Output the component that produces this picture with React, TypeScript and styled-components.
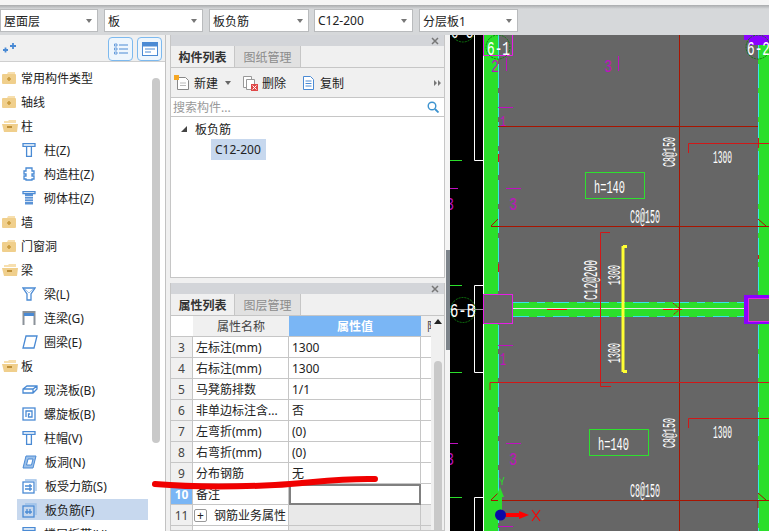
import React from "react";
import styled, { createGlobalStyle } from "styled-components";

const GlobalStyle = createGlobalStyle`
  html, body {
    margin: 0;
    padding: 0;
    width: 769px;
    height: 531px;
    overflow: hidden;
    background: #f0f0f0;
    font-family: "Noto Sans", "Noto Sans CJK SC", sans-serif;
    font-size: 12px;
    color: #222;
  }
  * { box-sizing: border-box; }
`;

const Page = styled.div`
  position: relative;
  width: 769px;
  height: 531px;
  overflow: hidden;
  display: flex;
  flex-direction: column;
`;

const TopStrip = styled.div`
  height: 5px;
  background: #f5f5f5;
`;

const FilterBar = styled.div`
  height: 30px;
  padding-top: 4px;
  display: flex;
  background: linear-gradient(#a9abad 0, #d6d8da 4px);
`;

const Filter = styled.div<{ $w: number; $gap: number }>`
  width: ${(p) => p.$w}px;
  margin-right: ${(p) => p.$gap}px;
  height: 23px;
  padding: 0 3px;
  display: flex;
  align-items: center;
  justify-content: space-between;
  background: #fff;
  border: 1px solid #b9bbbd;
  font-size: 12px;
  &::after {
    content: "";
    margin-right: 2px;
    border-top: 4px solid #777;
    border-left: 3px solid transparent;
    border-right: 3px solid transparent;
  }
`;

const Body = styled.div`
  flex: 1;
  min-height: 0;
  display: flex;
`;

const LeftPanel = styled.div`
  width: 166px;
  height: 496px;
  background: #fff;
  border-right: 1px solid #c2c2c2;
  overflow: hidden;
`;

const LeftTools = styled.div`
  height: 27px;
  padding: 1px 3px 0 3px;
  display: flex;
  align-items: center;
  gap: 4px;
  background: #f0f0f0;
  border-bottom: 1px solid #cfcfcf;
  > svg:first-child { margin-right: 88px; }
`;

const ModeButton = styled.div`
  width: 25px;
  height: 24px;
  display: flex;
  align-items: center;
  justify-content: center;
  border: 1px solid #7db9ee;
  border-radius: 4px;
  background: #eef6fd;
`;

const TreeWrap = styled.div`
  position: relative;
  padding-top: 4px;
`;

const TreeScroll = styled.div`
  position: absolute;
  left: 152px;
  top: 16px;
  width: 8px;
  height: 365px;
  border-radius: 4px;
  background: #c9c9c9;
`;

const TreeRow = styled.div<{ $child: boolean; $selected?: boolean }>`
  height: 24px;
  display: flex;
  align-items: center;
  margin-left: ${(p) => (p.$child ? 17 : 2)}px;
  width: ${(p) => (p.$child ? 131 : 146)}px;
  padding-left: ${(p) => (p.$child ? 5 : 0)}px;
  gap: ${(p) => (p.$child ? 8 : 5)}px;
  white-space: nowrap;
  background: ${(p) => (p.$selected ? "linear-gradient(transparent 1px, #c7d8ee 1px, #c7d8ee 22px, transparent 22px)" : "transparent")};
`;

const Gutter = styled.div`
  width: 4px;
`;

const MidColumn = styled.div`
  width: 275px;
  display: flex;
  flex-direction: column;
  gap: 5px;
`;

const Panel = styled.div<{ $h: number }>`
  height: ${(p) => p.$h}px;
  flex: none;
  display: flex;
  flex-direction: column;
  border-left: 1px solid #c6c6c6;
  border-right: 1px solid #c6c6c6;
  border-bottom: 1px solid #c6c6c6;
  overflow: hidden;
  background: #f0f0f0;
`;

const PanelHead = styled.div`
  height: 11px;
  flex: none;
  padding-right: 5px;
  display: flex;
  align-items: center;
  justify-content: flex-end;
  background: #d3d5d9;
`;

const Tabs = styled.div`
  height: 22px;
  flex: none;
  display: flex;
  background: #f0f0f0;
  border-bottom: 1px solid #c6c6c6;
`;

const Tab = styled.div<{ $active?: boolean }>`
  width: ${(p) => (p.$active ? 64 : 66)}px;
  display: flex;
  align-items: center;
  justify-content: center;
  font-weight: ${(p) => (p.$active ? 700 : 400)};
  color: ${(p) => (p.$active ? "#333" : "#8c8c8c")};
  background: ${(p) => (p.$active ? "#f0f0f0" : "#e1e1e1")};
  border-right: 1px solid #c6c6c6;
`;

const ListTools = styled.div`
  height: 30px;
  flex: none;
  padding: 0 3px;
  display: flex;
  align-items: center;
  background: #f0f0f0;
  border-bottom: 1px solid #c6c6c6;
  > svg:last-child { margin-left: auto; }
`;

const ToolItem = styled.div<{ $w: number }>`
  width: ${(p) => p.$w}px;
  display: flex;
  align-items: center;
  gap: 4px;
`;

const Caret = styled.span`
  margin-left: 3px;
  border-top: 4px solid #666;
  border-left: 3px solid transparent;
  border-right: 3px solid transparent;
`;

const Search = styled.div`
  height: 19px;
  flex: none;
  padding: 0 5px 0 2px;
  display: flex;
  align-items: center;
  justify-content: space-between;
  background: #fff;
  border-bottom: 1px solid #c6c6c6;
  color: #999;
`;

const ListBody = styled.div`
  flex: 1;
  background: #fff;
  padding-top: 1px;
`;

const ListRoot = styled.div`
  height: 21px;
  padding-left: 10px;
  display: flex;
  align-items: center;
  gap: 8px;
`;

const ListRootArrow = styled.span`
  border-bottom: 6px solid #444;
  border-left: 6px solid transparent;
`;

const ListItem = styled.div`
  margin-left: 40px;
  width: 55px;
  height: 21px;
  padding-left: 4px;
  display: flex;
  align-items: center;
  background: #c7d8ee;
`;

const TableWrap = styled.div`
  position: relative;
  flex: 1;
  display: flex;
  background: #f0f0f0;
`;

const PropGrid = styled.div`
  width: 260px;
  display: grid;
  grid-template-columns: 22px 96px 132px 10px;
  grid-auto-rows: 21px;
  overflow: hidden;
  background: #fff;
`;

const HeadCell = styled.div<{ $accent?: boolean; $blank?: boolean; $clipped?: boolean }>`
  display: flex;
  align-items: center;
  justify-content: ${(p) => (p.$clipped ? "flex-start" : "center")};
  padding-left: ${(p) => (p.$clipped ? 6 : 0)}px;
  overflow: hidden;
  white-space: nowrap;
  background: ${(p) => (p.$blank ? "#fff" : p.$accent ? "#7ab6f5" : "#f0f0f0")};
  color: ${(p) => (p.$accent ? "#fff" : "#444")};
  font-weight: ${(p) => (p.$accent ? 700 : 400)};
  border-bottom: 1px solid #c6c6c6;
`;

const NumCell = styled.div<{ $active?: boolean }>`
  display: flex;
  align-items: center;
  justify-content: center;
  color: ${(p) => (p.$active ? "#fff" : "#444")};
  font-weight: ${(p) => (p.$active ? 700 : 400)};
  background: ${(p) => (p.$active ? "#7ab6f5" : "#f0f0f0")};
  border-bottom: 1px solid #c6c6c6;
  border-right: 1px solid #c6c6c6;
`;

const NameCell = styled.div`
  display: flex;
  align-items: center;
  gap: 5px;
  padding-left: 3px;
  white-space: nowrap;
  overflow: hidden;
  background: #fff;
  border-bottom: 1px solid #c6c6c6;
  border-right: 1px solid #c6c6c6;
`;

const ValueCell = styled.div<{ $editing?: boolean; $group?: boolean }>`
  display: flex;
  align-items: center;
  padding-left: 3px;
  background: ${(p) => (p.$group ? "#e9e9e9" : "#fff")};
  border: ${(p) => (p.$editing ? "2px solid #808080" : "0 solid #c6c6c6")};
  border-bottom-width: ${(p) => (p.$editing ? 2 : 1)}px;
  border-right-width: ${(p) => (p.$editing ? 2 : 1)}px;
`;

const ExtraCell = styled.div<{ $group?: boolean }>`
  background: ${(p) => (p.$group ? "#e9e9e9" : "#fff")};
  border-bottom: 1px solid #c6c6c6;
`;

const PlusBox = styled.span`
  width: 13px;
  height: 13px;
  margin: 0 2px 0 -2px;
  flex: none;
  display: flex;
  align-items: center;
  justify-content: center;
  border: 1px solid #999;
  border-radius: 2px;
  font-size: 12px;
  line-height: 11px;
`;

const PropScroll = styled.div`
  flex: 1;
  position: relative;
  background: #f0f0f0;
  &::before {
    content: "";
    position: absolute;
    left: 3px;
    top: 3px;
    border-bottom: 5px solid #222;
    border-left: 4px solid transparent;
    border-right: 4px solid transparent;
  }
  &::after {
    content: "";
    position: absolute;
    left: 3px;
    top: 45px;
    width: 8px;
    height: 190px;
    border-radius: 4px;
    background: #c9c9c9;
  }
`;

const Splitter = styled.div`
  width: 5px;
  background: #f4f4f4;
  padding-top: 215px;
`;

const SplitterHandle = styled.div`
  width: 4px;
  height: 100px;
  background: #7d848b;
  margin-left: 1px;
`;

const Cad = styled.svg`
  display: block;
  flex: none;
  text {
    font-family: "Liberation Mono", monospace;
  }
`;

const MarkerOverlay = styled.svg`
  position: absolute;
  left: 0;
  top: 0;
  pointer-events: none;
`;

const BLUE = "#4a8ad4";

const CloseIcon: React.FC = () => (
  <svg width="8" height="8" viewBox="0 0 8 8">
    <path d="M1 1l6 6M7 1L1 7" stroke="#777" strokeWidth="1.500" />
  </svg>
);

const TreeIcon: React.FC<{ kind: string }> = ({ kind }) => {
  const s = { fill: "none", stroke: BLUE, strokeWidth: 1.3 };
  switch (kind) {
    case "closed":
      return (
        <svg width="14" height="14" viewBox="0 0 14 14">
          <path d="M0 3h5l1-2h7v2H0z" fill="#f7dfae" />
          <rect x="0" y="3" width="14" height="10" rx="1" fill="#f0cf8c" />
          <path d="M5 8h4M7 6v4" stroke="#c99a3c" strokeWidth="1.6" />
        </svg>
      );
    case "open":
      return (
        <svg width="16" height="14" viewBox="0 0 16 14" style={{ marginRight: -2 }}>
          <path d="M2 2h4l1-1h7v3H2z" fill="#f7dfae" />
          <path d="M0 5h16l-1 8H2z" fill="#f0cf8c" />
          <path d="M5 8h5" stroke="#b9892f" strokeWidth="1.8" />
        </svg>
      );
    case "column":
      return (
        <svg width="14" height="14" viewBox="0 0 14 14">
          <path d="M1 .7h12v2.6H1zM4.6 3.3h4.8v10H4.6z" {...s} />
        </svg>
      );
    case "struct":
      return (
        <svg width="14" height="14" viewBox="0 0 14 14">
          <path d="M4 1h6v3h2v3h-2v2h2v3h-2v1H4v-1H2V9h2V7H2V4h2z" {...s} />
        </svg>
      );
    case "brick":
      return (
        <svg width="14" height="14" viewBox="0 0 14 14">
          <path d="M1 .7h12v2H1z" {...s} />
          <rect x="3" y="3" width="8" height="10.5" fill="#5b93d6" />
          <path d="M3 5.5h8M3 8h8M3 10.5h8" stroke="#cfe0f4" strokeWidth="1" />
        </svg>
      );
    case "beam":
      return (
        <svg width="14" height="14" viewBox="0 0 14 14">
          <path d="M1 1h12L9 7v6H5V7z" {...s} />
          <path d="M3 2l4 4 4-4" fill="none" stroke="#a9c7ea" />
        </svg>
      );
    case "link":
      return (
        <svg width="14" height="16" viewBox="0 0 14 16">
          <path d="M1.5 15V2h11v13" fill="none" stroke="#8b9299" strokeWidth="2" />
          <rect x="2" y="3" width="10" height="3" fill="#4a8ad4" />
        </svg>
      );
    case "ring":
      return (
        <svg width="16" height="14" viewBox="0 0 16 14" style={{ marginRight: -2 }}>
          <path d="M4 1h11l-3 12H1z" {...s} />
        </svg>
      );
    case "slab":
      return (
        <svg width="16" height="12" viewBox="0 0 16 12" style={{ marginRight: -2 }}>
          <path d="M1 5l4-3h10v3l-4 4H1zM1 5h10l4-3M11 5v4" {...s} />
        </svg>
      );
    case "spiral":
      return (
        <svg width="14" height="14" viewBox="0 0 14 14">
          <rect x="1" y="1" width="12" height="12" {...s} />
          <path d="M4 10V4h6v6H6.500V7h1.500" {...s} />
        </svg>
      );
    case "hole":
      return (
        <svg width="15" height="14" viewBox="0 0 15 14">
          <path d="M4 1h10l-3 12H1z" fill="#9cc0e9" stroke={BLUE} />
          <path d="M6 4h5l-1.500 6h-5z" fill="#fff" stroke={BLUE} />
        </svg>
      );
    default:
      return (
        <svg width="15" height="15" viewBox="0 0 15 15">
          <path d="M3 1h11v11" {...s} stroke="#9cc0e9" />
          <rect x="1" y="3" width="11" height="11" {...s} />
          <path d={kind === "neg" ? "M3 9h7M5 6v5M8 6v5" : "M3 7h7M3 10h7M8 5v7"} {...s} />
        </svg>
      );
  }
};

const treeRows = [
  { label: "常用构件类型", icon: "closed" },
  { label: "轴线", icon: "closed" },
  { label: "柱", icon: "open" },
  { label: "柱(Z)", icon: "column", child: true },
  { label: "构造柱(Z)", icon: "struct", child: true },
  { label: "砌体柱(Z)", icon: "brick", child: true },
  { label: "墙", icon: "closed" },
  { label: "门窗洞", icon: "closed" },
  { label: "梁", icon: "open" },
  { label: "梁(L)", icon: "beam", child: true },
  { label: "连梁(G)", icon: "link", child: true },
  { label: "圈梁(E)", icon: "ring", child: true },
  { label: "板", icon: "open" },
  { label: "现浇板(B)", icon: "slab", child: true },
  { label: "螺旋板(B)", icon: "spiral", child: true },
  { label: "柱帽(V)", icon: "column", child: true },
  { label: "板洞(N)", icon: "hole", child: true },
  { label: "板受力筋(S)", icon: "pos", child: true },
  { label: "板负筋(F)", icon: "neg", child: true, selected: true },
  { label: "楼层板带(H)", icon: "column", child: true },
];

const propRows = [
  { n: 3, name: "左标注(mm)", value: "1300" },
  { n: 4, name: "右标注(mm)", value: "1300" },
  { n: 5, name: "马凳筋排数", value: "1/1" },
  { n: 6, name: "非单边标注含...", value: "否" },
  { n: 7, name: "左弯折(mm)", value: "(0)" },
  { n: 8, name: "右弯折(mm)", value: "(0)" },
  { n: 9, name: "分布钢筋", value: "无" },
  { n: 10, name: "备注", value: "", editing: true },
  { n: 11, name: "钢筋业务属性", value: "", group: true },
  { n: 12, name: "显示样式", value: "", group: true },
];

const filters = [
  { label: "屋面层", w: 98, gap: 6 },
  { label: "板", w: 99, gap: 6 },
  { label: "板负筋", w: 100, gap: 5 },
  { label: "C12-200", w: 99, gap: 6 },
  { label: "分层板1", w: 99, gap: 0 },
];

const CadLabel: React.FC<{ x: number; y: number; w: number; h?: number; rot?: boolean; fill?: string; children: string }> = ({
  x,
  y,
  w,
  h = 19,
  rot,
  fill = "#fff",
  children,
}) => (
  <text
    x={0}
    y={0}
    fontSize={h}
    fill={fill}
    textLength={w}
    lengthAdjust="spacingAndGlyphs"
    transform={`translate(${x} ${y})${rot ? " rotate(-90)" : ""}`}
  >
    {children}
  </text>
);

// canvas coordinates: svg origin is at page (450, 35)
const CadDrawing: React.FC = () => {
  const ox = 450;
  const oy = 35;
  return (
    <Cad width="319" height="496" viewBox={`${ox} ${oy} 319 496`}>
      <rect x={450} y={35} width={319} height={496} fill="#000" />
      <rect x={484} y={35} width={14} height={496} fill="#2bdf2b" />
      <rect x={498} y={35} width={260} height={496} fill="#666" />
      <rect x={758} y={35} width={11} height={496} fill="#2bdf2b" />
      <path d="M483.500 35V531" stroke="#fff" />
      <path d="M474.500 35V160.500H483M474.500 285.500H483M474.500 285.500V372.500H483M474.500 531V497.500H483" fill="none" stroke="#fff" />
      <path d="M450 160.500h12M450 285.500h12M450 372.500h12M450 497.500h12" stroke="#2bdf2b" />
      <path d="M498.500 35V531M758.500 35V531" stroke="#35e6e6" strokeDasharray="24 5" />

      {/* beam band */}
      <rect x={513} y={302} width={233} height={15} fill="#2bdf2b" />
      <path d="M513 302.500H745M513 316.500H745" stroke="#35e6e6" strokeDasharray="16 8 8 8" />
      <path d="M450 309.500H483" stroke="#9a9a9a" />
      <path d="M513 308.500H748" stroke="#e8e8e8" />
      <path d="M547 309.500h10M557 309.500h10M663 309.500h10M674 309.500h8" stroke="#f00" />
      <path d="M673 303l7 6-7 6" fill="none" stroke="#c00" strokeDasharray="2 1" />

      {/* columns */}
      <rect x={483.500} y={294.500} width={29} height={29} fill="#666" stroke="#e61ee6" strokeWidth="1" />
      <rect x={744} y={295} width={25} height={29} fill="#8a00ff" />
      <rect x={748.500} y={298.500} width={22} height={23} fill="#666" stroke="#e61ee6" />
      <path d="M744 35h25v10h-20v-5h-5z" fill="#8a00ff" />
      <path d="M483.500 35v20.500h29V35" fill="none" stroke="#e61ee6" />

      {/* rebar lines */}
      <g fill="none" stroke="#a81400">
        <path d="M498 126.500H758" />
        <path d="M679.500 35V531" />
        <path d="M491 226.500H769M491 226l7-7M766 226l-8-7" />
        <path d="M491 500.500H769M491 500l7-7M766 500l-8-7M758 500v8" />
      </g>
      <g fill="none" stroke="#d01818">
        <path d="M490 390V382.500H769" />
        <path d="M610 232.500H600.500V386.500H611" />
        <path d="M688.500 153V143.500H769" />
        <path d="M688.500 428V418.500H769" />
        <path d="M498.500 154v8M498.500 264v8M758.500 138v10M758.500 255v4" />
      </g>
      <path d="M623 246V372" stroke="#ffff33" strokeWidth="3" />
      <path d="M623 246.500h4M623 371.500h4" stroke="#ffff33" strokeWidth="3" />

      {/* magenta marks */}
      <g fill="none" stroke="#c010c0">
        <path d="M506.500 58v13M618.500 56v15M498 107.500h15M506 188.500h15M450 188.500h8M498 345.500h15M506 443.500h15M450 443.500h8M498 526.500h15" />
      </g>
      <CadLabel x={491} y={72} w={8} h={18} fill="#c010c0">2</CadLabel>
      <CadLabel x={604} y={72} w={8} h={18} fill="#c010c0">3</CadLabel>
      <CadLabel x={500} y={126} w={6} h={15} fill="#c010c0">1</CadLabel>
      <CadLabel x={509} y={210} w={8} h={19} fill="#c010c0">3</CadLabel>
      <CadLabel x={446} y={210} w={8} h={19} fill="#c010c0">3</CadLabel>
      <CadLabel x={500} y={365} w={6} h={19} fill="#c010c0">1</CadLabel>
      <CadLabel x={509} y={465} w={8} h={19} fill="#c010c0">3</CadLabel>
      <CadLabel x={446} y={465} w={8} h={19} fill="#c010c0">3</CadLabel>

      {/* axis bubbles */}
      <g fill="none" stroke="#0f7a0f" strokeDasharray="2 1">
        <circle cx={463} cy={310} r={12.500} />
        <circle cx={498} cy={47} r={12} />
        <circle cx={758} cy={47} r={12} />
        <circle cx={463} cy={30} r={12} />
      </g>
      <CadLabel x={450} y={317} w={25} h={21}>6-B</CadLabel>
      <CadLabel x={487} y={55} w={23} h={21}>6-1</CadLabel>
      <CadLabel x={747} y={55} w={23} h={21}>6-2</CadLabel>
      <CadLabel x={451} y={38} w={22} h={19}>6-C</CadLabel>

      {/* slab height boxes */}
      <rect x={585.500} y={172.500} width={59} height={26} fill="none" stroke="#2ee02e" />
      <rect x={589.500} y={429.500} width={59} height={26} fill="none" stroke="#2ee02e" />
      <CadLabel x={594} y={193} w={31}>h=140</CadLabel>
      <CadLabel x={598} y={450} w={31}>h=140</CadLabel>

      {/* dimensions */}
      <CadLabel x={675} y={167} w={30} h={18} rot>C8@150</CadLabel>
      <CadLabel x={675} y={448} w={30} h={18} rot>C8@150</CadLabel>
      <CadLabel x={630} y={223} w={30} h={20}>C8@150</CadLabel>
      <CadLabel x={630} y={497} w={30} h={20}>C8@150</CadLabel>
      <CadLabel x={713} y={163} w={19} h={19}>1300</CadLabel>
      <CadLabel x={713} y={438} w={19} h={19}>1300</CadLabel>
      <CadLabel x={597} y={300} w={40} h={20} rot>C12@200</CadLabel>
      <CadLabel x={620} y={285} w={20} h={19} rot>1300</CadLabel>
      <CadLabel x={620} y={363} w={20} h={19} rot>1300</CadLabel>

      {/* origin */}
      <path d="M500 515V496" stroke="#2bdf2b" strokeWidth="4" />
      <path d="M496 497l4-10 4 10z" fill="#2bdf2b" />
      <path d="M500 515H520" stroke="#f00" strokeWidth="4" />
      <path d="M519 511l10 4-10 4z" fill="#f00" />
      <circle cx={500.500} cy={515} r={5.500} fill="#0a0aa8" />
      <path d="M532 510l8 11M540 510l-8 11" stroke="#f00" strokeWidth="1.200" fill="none" />
      <path d="M499 478l3 4 2-5M502 482v3" stroke="#2bdf2b" fill="none" />
    </Cad>
  );
};

const App: React.FC = () => (
  <>
    <GlobalStyle />
    <Page>
      <TopStrip />
      <FilterBar>
        {filters.map((f) => (
          <Filter key={f.label} $w={f.w} $gap={f.gap}>
            {f.label}
          </Filter>
        ))}
      </FilterBar>
      <Body>
        <LeftPanel>
          <LeftTools>
            <svg width="13" height="11" viewBox="0 0 13 11">
              <path d="M0 7h5M2.500 4.500v5" stroke={BLUE} strokeWidth="1.800" />
              <path d="M7 3h6M10 0v6" stroke={BLUE} strokeWidth="1.800" />
            </svg>
            <ModeButton>
              <svg width="14" height="14" viewBox="0 0 14 14">
                <path d="M.5 2h2.500v2H.5zM.5 6h2.500v2H.5zM.5 10h2.500v2H.5z" fill="none" stroke={BLUE} strokeWidth=".8" />
                <path d="M5 3h9M5 7h9M5 11h9" stroke={BLUE} />
              </svg>
            </ModeButton>
            <ModeButton>
              <svg width="16" height="14" viewBox="0 0 16 14">
                <rect x=".5" y=".5" width="15" height="13" fill="#fff" stroke={BLUE} />
                <rect x="1" y="1" width="14" height="3.500" fill={BLUE} />
                <path d="M3 7h10M3 10h6" stroke={BLUE} />
              </svg>
            </ModeButton>
          </LeftTools>
          <TreeWrap>
            <TreeScroll />
            {treeRows.map((r) => (
              <TreeRow key={r.label} $child={!!r.child} $selected={r.selected}>
                <TreeIcon kind={r.icon} />
                {r.label}
              </TreeRow>
            ))}
          </TreeWrap>
        </LeftPanel>
        <Gutter />
        <MidColumn>
          <Panel $h={243}>
            <PanelHead>
              <CloseIcon />
            </PanelHead>
            <Tabs>
              <Tab $active>构件列表</Tab>
              <Tab>图纸管理</Tab>
            </Tabs>
            <ListTools>
              <ToolItem $w={69}>
                <svg width="16" height="16" viewBox="0 0 16 16">
                  <path d="M3.500 2.500h8l3 3v9h-11z" fill="#fff" stroke="#888" />
                  <path d="M6 8h6M6 10.500h6" stroke="#bbb" />
                  <rect x="0" y="0" width="5" height="5" fill="#f5a623" />
                </svg>
                新建
                <Caret />
              </ToolItem>
              <ToolItem $w={59}>
                <svg width="15" height="16" viewBox="0 0 15 16">
                  <path d="M.5 1.500h8v11h-8z" fill="#fff" stroke="#999" />
                  <path d="M3.500 4.500h8v10h-8z" fill="#fff" stroke="#999" />
                  <rect x="8" y="9" width="7" height="7" fill="#e04848" />
                  <path d="M9.500 10.500l4 4M13.500 10.500l-4 4" stroke="#fff" />
                </svg>
                删除
              </ToolItem>
              <ToolItem $w={60}>
                <svg width="14" height="16" viewBox="0 0 14 16">
                  <path d="M1.500 1.500h7l3 3v10h-10z" fill="#fff" stroke={BLUE} />
                  <path d="M3.500 6h6M3.500 8.500h6M3.500 11h6" stroke={BLUE} />
                </svg>
                复制
              </ToolItem>
              <svg width="7" height="6" viewBox="0 0 7 6">
                <path d="M0 0l3 3-3 3zM4 0l3 3-3 3z" fill="#777" />
              </svg>
            </ListTools>
            <Search>
              搜索构件...
              <svg width="12" height="12" viewBox="0 0 12 12">
                <circle cx="5" cy="5" r="3.800" fill="none" stroke="#3d93cf" strokeWidth="1.400" />
                <path d="M8 8l3.500 3.500" stroke="#3d93cf" strokeWidth="1.800" />
              </svg>
            </Search>
            <ListBody>
              <ListRoot>
                <ListRootArrow />
                板负筋
              </ListRoot>
              <ListItem>C12-200</ListItem>
            </ListBody>
          </Panel>
          <Panel $h={248}>
            <PanelHead>
              <CloseIcon />
            </PanelHead>
            <Tabs>
              <Tab $active>属性列表</Tab>
              <Tab>图层管理</Tab>
            </Tabs>
            <TableWrap>
              <PropGrid>
                <HeadCell $blank />
                <HeadCell>属性名称</HeadCell>
                <HeadCell $accent>属性值</HeadCell>
                <HeadCell $clipped>附</HeadCell>
                {propRows.map((r) => (
                  <React.Fragment key={r.n}>
                    <NumCell $active={r.editing}>{r.n}</NumCell>
                    <NameCell>
                      {r.group && <PlusBox>+</PlusBox>}
                      {r.name}
                    </NameCell>
                    <ValueCell $editing={r.editing} $group={r.group}>
                      {r.value}
                    </ValueCell>
                    <ExtraCell $group={r.group} />
                  </React.Fragment>
                ))}
              </PropGrid>
              <PropScroll />
            </TableWrap>
          </Panel>
        </MidColumn>
        <Splitter>
          <SplitterHandle />
        </Splitter>
        <CadDrawing />
      </Body>
      <MarkerOverlay width="769" height="531" viewBox="0 0 769 531">
        <path
          d="M155 484C190 487 235 487 275 485C310 483 340 478 375 479"
          fill="none"
          stroke="#f00000"
          strokeWidth="6"
          strokeLinecap="round"
        />
      </MarkerOverlay>
    </Page>
  </>
);

export default App;
